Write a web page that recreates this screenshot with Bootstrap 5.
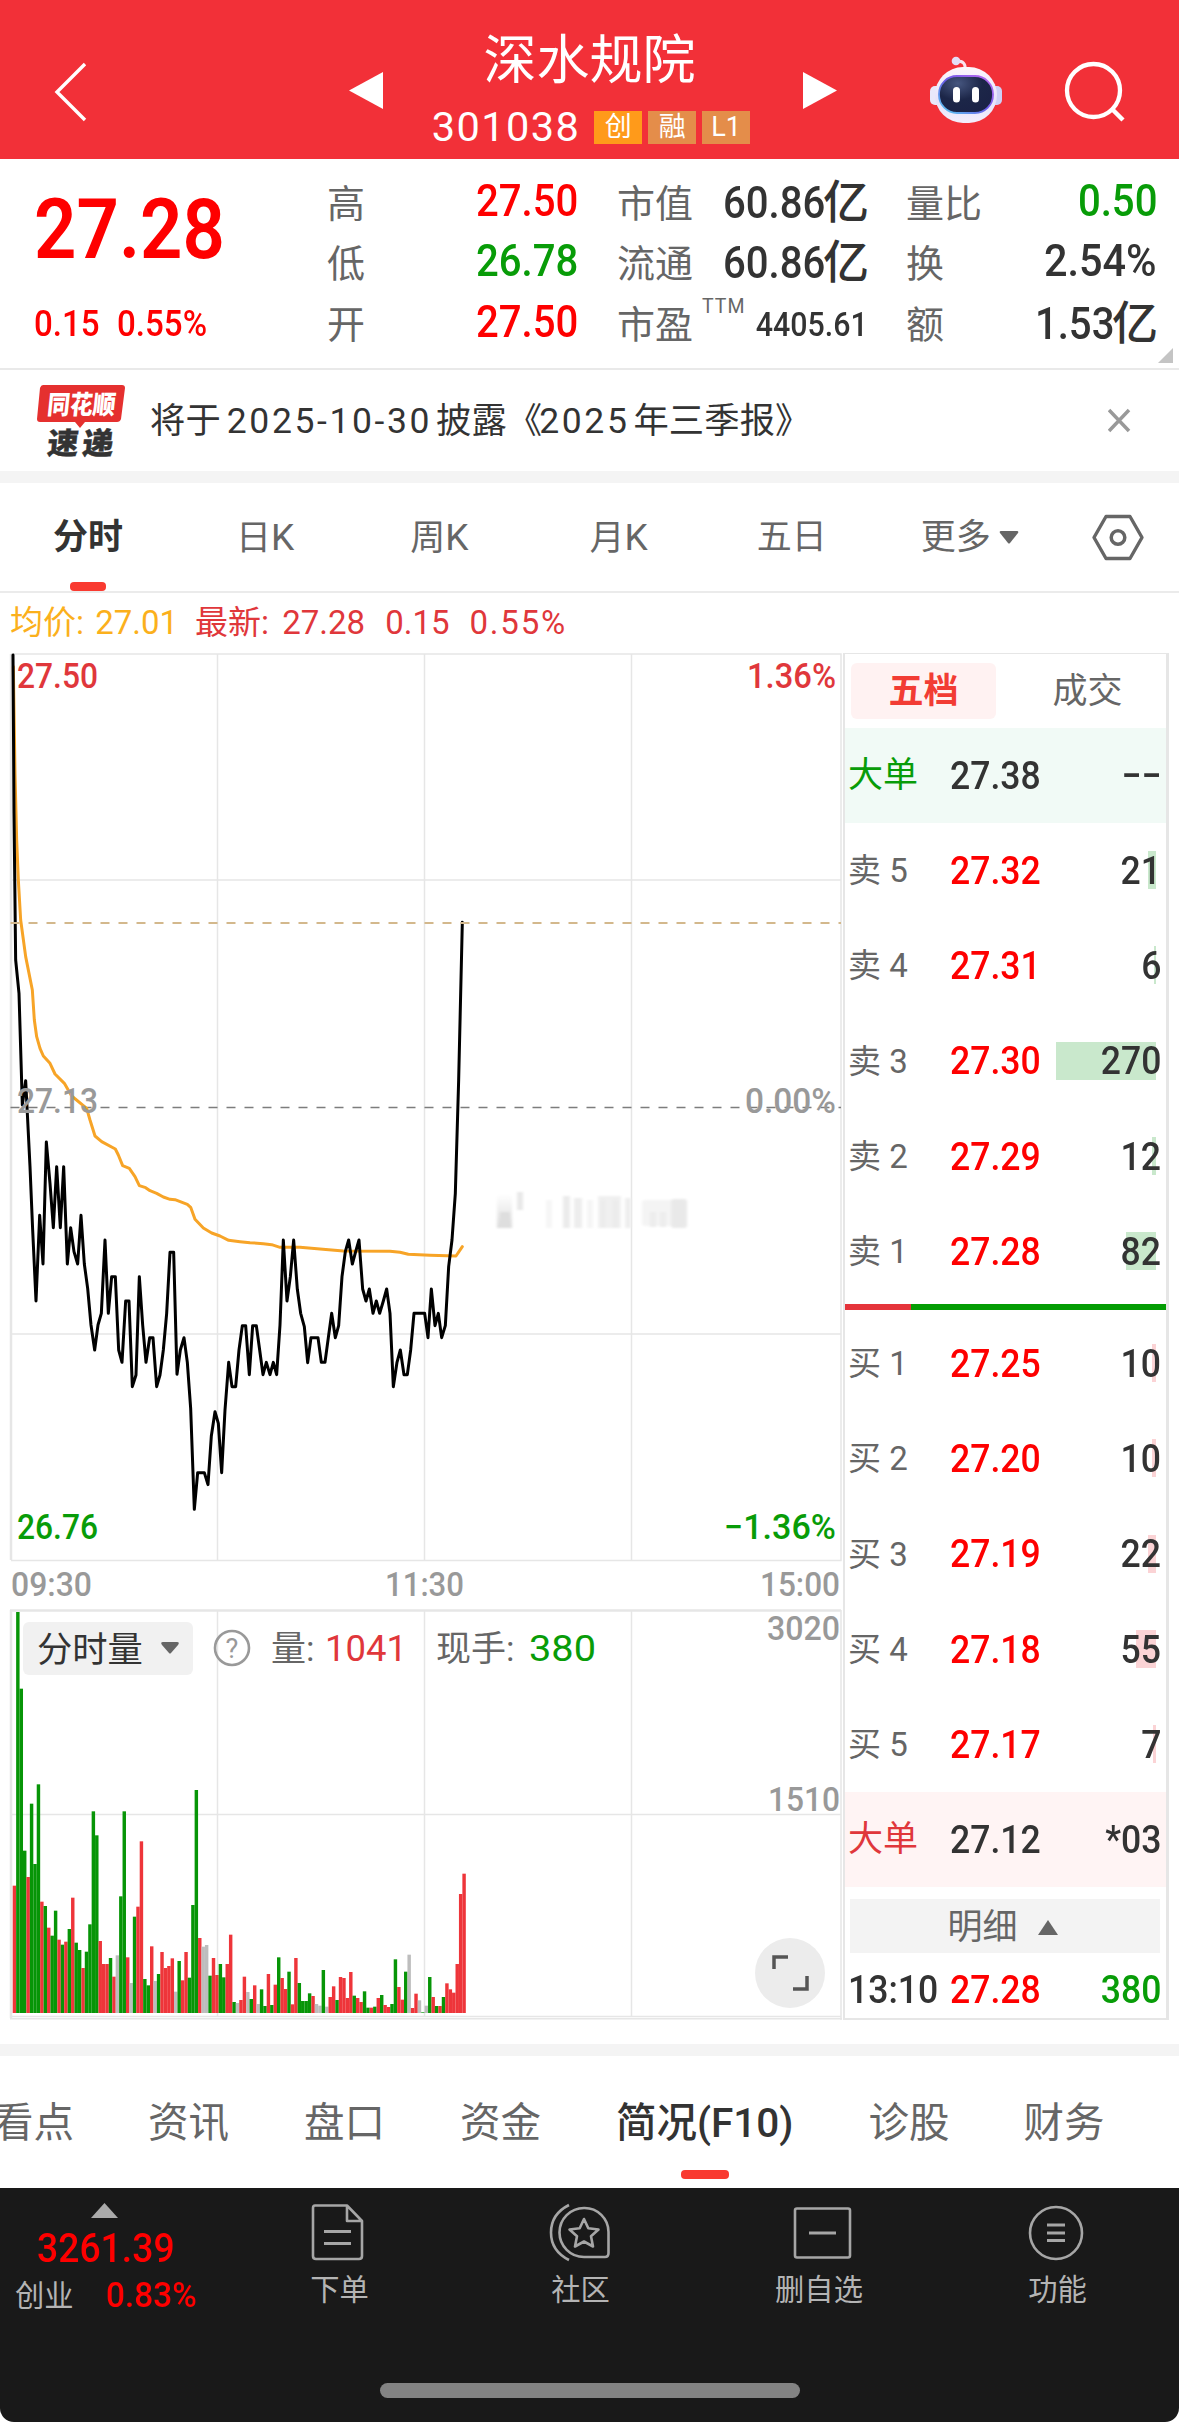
<!DOCTYPE html>
<html lang="zh-CN">
<head>
<meta charset="utf-8">
<meta name="viewport" content="width=device-width, initial-scale=1">
<title>深水规院 301038</title>
<link rel="stylesheet" href="https://cdn.jsdelivr.net/npm/bootstrap@5.3.0/dist/css/bootstrap.min.css">
<style>
:root{--up:#fe0000;--dn:#089c08;--ink:#333;--sub:#666}
body{width:1179px;height:2422px;overflow:hidden;background:#fff;color:var(--ink);font-family:Roboto,"Noto Sans CJK SC",sans-serif;font-size:35px;line-height:1}
svg{display:block;flex:none}
svg text{font-family:Roboto,"Noto Sans CJK SC",sans-serif}
.din{display:inline-block;font-weight:500;transform:scaleX(.92);transform-origin:0 50%;white-space:nowrap}
.din-r{transform-origin:100% 50%}
.up{color:var(--up)}.dn{color:var(--dn)}.crim{color:#e0373b}.amber{color:#fbb01c}
.topbar{height:159px;background:#f23038;color:#fff}
.stock-head{width:392px;padding-top:29px}
.stock-name{font-size:53px;line-height:64px;margin-left:-3px}
.stock-code{font-size:41.5px;line-height:42px;letter-spacing:1.4px;margin-right:8px}
.code-row{margin-top:13px;gap:6px}
.flag{width:48px;height:33px;background:#e48d4a;font-size:27px;line-height:33px}
.flag-hot{background:#ff9a1a}
.quote{height:211px;border-bottom:2px solid #e9e9e9;padding-top:13px;position:relative}
.quote-main{width:329px;padding-left:34px}
.last-price{font-size:84px;line-height:84px;margin-top:16px;font-weight:600;transform:scaleX(.885)}
.change{font-size:36px;line-height:40px;margin-top:32px}
.change span{display:inline-block}
.qcol{width:249px}
.qrow{height:60.4px;line-height:60px}
.qlabel{font-size:38px;color:var(--sub);padding-top:2px;margin-left:-2px}
.qval{font-size:43.6px}
.yi{font-size:46px;font-weight:500;margin-left:-2px;margin-right:-1px;display:inline-block}
.ttm{font-size:19.5px;line-height:20px;letter-spacing:1px;color:var(--sub);padding-top:4px;margin-left:9px}
.corner{position:absolute;right:6px;bottom:5px}
.notice{height:101px;padding-left:32px}
.notice-text{font-size:35.3px;line-height:42px;margin-left:18px;letter-spacing:.1px}
.notice-text b{font-weight:400;font-size:35.5px;letter-spacing:2.6px;margin:0 4px 0 6px}
.band{height:12px;background:#f4f4f4}
.ktabs{height:110px;border-bottom:2px solid #ebebeb;color:var(--sub);font-size:35px;line-height:110px}
.ktabs>div{flex:none;position:relative;white-space:nowrap}
.tab-on{font-weight:700;color:var(--ink)}
.tab-on::after{content:"";position:absolute;left:50%;bottom:0;height:9px;width:var(--w,36px);margin-left:calc(var(--w,36px)/-2);border-radius:4px;background:#f93a30}
.info{height:60px;padding-left:10px;font-size:33px;line-height:59px}
.info span{white-space:pre}
.board{height:1368px}
.depth{width:326px;border:2px solid #e6e6e6;border-top-width:1px;border-right-width:3px;height:1367px}
.depth .din{transform:scaleX(.9)}
.dtabs{height:74px;padding:9px 0 0 6px;line-height:58px;font-size:35px;color:var(--sub)}
.dtabs>div{width:145px;height:56px;text-align:center}
.dtab-on{background:#fff2f2;border-radius:6px;color:#f23c34;font-weight:700}
.drow{height:95.2px;padding:0 5px 0 3px;font-size:39.5px;position:relative}
.dname{width:102px;font-size:33px;color:var(--sub);white-space:pre}
.dname.big{font-size:35px}
.dname.dn{color:var(--dn)}.dname.crim{color:#e0373b}
.dname.clock{font-size:39.5px;color:var(--ink)}
.drow>*{z-index:1}
.vbar{position:absolute;right:10px;top:28px;height:38px;z-index:0;background:#c9e8cc}
.buy .vbar{background:#fbd3d5}
.ratio{height:6px;margin:5px 0 6px;background:#049c04}
.ratio i{display:block;height:6px;width:66px;background:#e5343b}
.more-btn{height:54px;margin:12px 6px 0 5px;background:#f3f3f3;color:var(--sub);font-size:35px;padding:2px 4px 0 0}
.ftabs{height:132px;line-height:135px;font-size:40.5px;color:var(--sub)}
.ftabs>div{flex:none;position:relative;white-space:nowrap;height:132px}
.ftabs .tab-on{--w:48px;font-weight:500}
.ftabs .tab-on::after{bottom:9px}
.dock{height:234px;background:#191919;border-radius:0 0 14px 14px;color:#b4b4b4}
.dock-item{width:241px;font-size:29.3px;line-height:40px;text-align:center}
.index-box{width:210px;padding-top:15px}
.home-bar{width:420px;height:15px;border-radius:8px;background:#838383;margin:71px auto 0}
</style>
</head>
<body>
<header class="topbar d-flex">
  <svg width="340" height="159" viewBox="0 0 340 159"><path d="M85 64 57 92 85 120" fill="none" stroke="#fff" stroke-width="3.4"/></svg>
  <svg width="55" height="159" viewBox="340 0 55 159"><path d="M349 90.500 383 72V109Z" fill="#fff"/></svg>
  <div class="stock-head text-center">
    <div class="stock-name">深水规院</div>
    <div class="code-row d-flex align-items-center justify-content-center">
      <span class="stock-code">301038</span>
      <span class="flag flag-hot">创</span><span class="flag">融</span><span class="flag">L1</span>
    </div>
  </div>
  <svg width="63" height="159" viewBox="787 0 63 159"><path d="M837 90.500 803 72V109Z" fill="#fff"/></svg>
  <svg width="180" height="159" viewBox="850 0 180 159">
    <defs><linearGradient id="head" x1="0" y1="0" x2="0" y2="1"><stop offset="0" stop-color="#fdf7fc"/><stop offset=".6" stop-color="#e6e2fa"/><stop offset="1" stop-color="#f3eefc"/></linearGradient>
    <linearGradient id="rim" x1="0" y1="1" x2="1" y2="0"><stop offset="0" stop-color="#5ad0f0"/><stop offset=".5" stop-color="#6a5be8"/><stop offset="1" stop-color="#c46af0"/></linearGradient>
    <radialGradient id="face" cx=".35" cy=".2" r=".9"><stop offset="0" stop-color="#46567f"/><stop offset=".5" stop-color="#1c2648"/><stop offset="1" stop-color="#1a2145"/></radialGradient></defs>
    <path d="M957 61q9 0 8 8" fill="none" stroke="#fbe4f0" stroke-width="3"/><circle cx="956" cy="61" r="4.300" fill="#e4def8"/>
    <rect x="930" y="86" width="12" height="19" rx="5" fill="#e9e8fa"/><rect x="990" y="86" width="12" height="19" rx="5" fill="#cdd0f5"/>
    <rect x="935" y="67" width="62" height="56" rx="28" fill="url(#head)"/>
    <rect x="939" y="76" width="54" height="37" rx="18" fill="url(#face)" stroke="url(#rim)" stroke-width="1.800"/>
    <rect x="953" y="87" width="7" height="15.500" rx="3.500" fill="#fff"/><rect x="972" y="87" width="7" height="15.500" rx="3.500" fill="#fff"/>
  </svg>
  <svg width="149" height="159" viewBox="1030 0 149 159"><circle cx="1093.500" cy="90.500" r="26.500" fill="none" stroke="#fff" stroke-width="4.300"/><path d="M1112 109 1123 120" stroke="#fff" stroke-width="4.500"/></svg>
</header>

<section class="quote d-flex">
  <div class="quote-main up">
    <div><span class="din last-price">27.28</span></div>
    <div class="change"><span class="din">0.15</span><span class="din" style="margin-left:12px">0.55%</span></div>
  </div>
  <div class="qcol">
    <div class="qrow d-flex justify-content-between"><span class="qlabel">高</span><span class="qval din din-r up">27.50</span></div>
    <div class="qrow d-flex justify-content-between"><span class="qlabel">低</span><span class="qval din din-r dn">26.78</span></div>
    <div class="qrow d-flex justify-content-between"><span class="qlabel">开</span><span class="qval din din-r up">27.50</span></div>
  </div>
  <div class="qcol" style="margin-left:41px">
    <div class="qrow d-flex justify-content-between"><span class="qlabel">市值</span><span><span class="qval din din-r">60.86</span><span class="yi">亿</span></span></div>
    <div class="qrow d-flex justify-content-between"><span class="qlabel">流通</span><span><span class="qval din din-r">60.86</span><span class="yi">亿</span></span></div>
    <div class="qrow d-flex"><span class="qlabel">市盈</span><span class="ttm">TTM</span><span class="din din-r ms-auto" style="font-size:33px;padding-top:2px">4405.61</span></div>
  </div>
  <div class="qcol" style="margin-left:40px">
    <div class="qrow d-flex justify-content-between"><span class="qlabel">量比</span><span class="qval din din-r dn">0.50</span></div>
    <div class="qrow d-flex justify-content-between"><span class="qlabel">换</span><span class="qval din din-r" style="transform:scaleX(.95)">2.54%</span></div>
    <div class="qrow d-flex justify-content-between"><span class="qlabel">额</span><span><span class="qval din din-r">1.53</span><span class="yi">亿</span></span></div>
  </div>
  <svg class="corner" width="15" height="15" viewBox="0 0 15 15"><path d="M15 0V15H0Z" fill="#c4c4c4"/></svg>
</section>

<section class="notice d-flex align-items-center">
  <svg width="100" height="80" viewBox="32 380 100 80">
    <path d="M43 384H122Q125 384 125 387L121 418Q120 421 117 421H85L80 427 75 421H40Q37 421 37 418L40 387Q41 384 43 384Z" fill="#e5302f"/>
    <g transform="skewX(-6)" font-weight="900"><text x="90" y="413" font-size="26" fill="#fff" textLength="68" lengthAdjust="spacingAndGlyphs">同花顺</text>
    <text x="94" y="453" font-size="30" fill="#333" stroke="#333" stroke-width=".4" textLength="31" lengthAdjust="spacingAndGlyphs">速</text><text x="129" y="453" font-size="30" fill="#333" stroke="#333" stroke-width=".4" textLength="31" lengthAdjust="spacingAndGlyphs">递</text></g>
  </svg>
  <div class="notice-text">将于<b>2025-10-30</b>披露《<b style="margin-left:-3px">2025</b>年三季报》</div>
  <svg class="ms-auto" width="71" height="40" viewBox="1108 400 71 40"><path d="M1109 409 1129 430M1129 409 1109 430" stroke="#999" stroke-width="3.500"/></svg>
</section>
<div class="band"></div>

<nav class="ktabs d-flex">
  <div class="tab-on" style="margin-left:53px">分时</div>
  <div style="margin-left:113px">日<span style="font-size:37px">K</span></div>
  <div style="margin-left:116px">周<span style="font-size:37px">K</span></div>
  <div style="margin-left:121px">月<span style="font-size:37px">K</span></div>
  <div style="margin-left:109px">五日</div>
  <div style="margin-left:94px">更多</div>
  <svg width="20" height="110" viewBox="1001 483 20 110" style="margin-left:8px"><path d="M1003 531H1019Q1021 531 1020 533L1012 543Q1011 544 1010 543L1002 533Q1001 531 1003 531Z" fill="#666"/></svg>
  <svg width="54" height="110" viewBox="1092 483 54 110" style="margin-left:72px"><path d="M1107 516.500H1131L1143 537.500 1131 558.500H1107L1095 537.500Z" fill="none" stroke="#666" stroke-width="3.400" stroke-linejoin="round"/><circle cx="1119" cy="537.500" r="6.800" fill="none" stroke="#666" stroke-width="3.500"/></svg>
</nav>

<div class="info d-flex">
  <span class="amber">均价: </span><span class="amber" style="margin-left:3px">27.01</span>
  <span class="crim" style="margin-left:17px">最新: </span><span class="crim" style="margin-left:5px">27.28</span>
  <span class="crim" style="margin-left:20px">0.15</span><span class="crim" style="margin-left:20px;letter-spacing:1.8px">0.55%</span>
</div>

<main class="board d-flex">
  <svg width="843" height="1368" viewBox="0 653 843 1368">
    <defs><linearGradient id="smudge" x1="0" y1="0" x2="0" y2="1"><stop offset="0" stop-color="#fff"/><stop offset="1" stop-color="#dcdcdc"/></linearGradient>
    <filter id="soft" x="-10%" y="-10%" width="120%" height="120%"><feGaussianBlur stdDeviation="1.800 1"/></filter></defs>
    <g stroke="#e6e6e6" stroke-width="1.500" fill="none">
      <path d="M11 654H841V1560.500H11M217.500 654V1560M424.500 654V1560M631.500 654V1560M11 880H841M11 1334H841"/>
      <path d="M11 2016.500H841M217.500 1611V2017M424.500 1611V2017M631.500 1611V2017M11 1814.500H841"/>
      <path d="M10 1610.500H841M11 654V1560M11 1610V2018" stroke-width="2.500"/>
      <path d="M841 1610V2020M10 2018.700H842" stroke-width="1.500"/>
    </g>
    <g filter="url(#soft)">
      <rect x="497" y="1194" width="15" height="34" fill="url(#smudge)"/><rect x="500" y="1212" width="10" height="16" fill="#dedede"/><rect x="517" y="1192" width="6" height="18" fill="#e8e8e8"/>
      <rect x="546" y="1200" width="6" height="28" fill="#f6f6f6"/><rect x="563" y="1196" width="7" height="32" fill="#ebebeb"/><rect x="574" y="1198" width="8" height="30" fill="#ededed"/><rect x="587" y="1200" width="6" height="28" fill="#f5f5f5"/><rect x="598" y="1196" width="23" height="32" fill="#f0f0f0"/><rect x="601" y="1200" width="4" height="28" fill="#ebebeb"/><rect x="613" y="1200" width="5" height="28" fill="#ebebeb"/><rect x="625" y="1198" width="6" height="30" fill="#eee"/>
      <rect x="642" y="1200" width="44" height="26" rx="3" fill="#f4f4f4"/><rect x="650" y="1212" width="6" height="15" fill="#ececec"/><rect x="660" y="1212" width="6" height="15" fill="#ececec"/><rect x="671" y="1199" width="16" height="29" rx="3" fill="#e9e9e9"/>
    </g>
    <path d="M10.500 1107.500H841" stroke="#7d7d7d" stroke-width="1.600" stroke-dasharray="9 9"/>
    <g transform="translate(0 1080) scale(.33333)" fill="none" stroke-linejoin="round" stroke-linecap="round">
      <polyline stroke="#f7a427" stroke-width="9" points="40,-1240 45,-920 50,-720 55,-600 62,-480 77,-370 97,-270 103,-180 110,-130 120,-95 130,-72 150,-50 165,-18 193,10 215,48 260,85 270,120 285,168 305,185 346,207 355,225 368,257 388,265 405,290 418,317 437,323 450,332 470,340 490,351 510,358 525,359 562,373 572,382 585,418 610,444 635,459 660,468 686,481 720,485 750,488 790,491 815,494 840,502 900,502 960,507 1030,513 1170,514 1200,517 1225,523 1290,526 1368,528 1387,500"/>
      <polyline stroke="#000" stroke-width="9" points="39,-1275 42,-800 47,-360 57,-260 67,75 77,2 83,120 90,260 98,450 108,663 119,406 129,552 139,186 150,310 160,443 170,260 181,443 191,260 202,552 212,443 222,515 233,552 243,406 253,552 263,625 273,735 284,810 294,735 304,700 315,480 325,700 335,590 346,590 356,810 366,847 377,663 387,663 397,920 408,885 418,590 428,735 438,847 449,773 459,773 470,920 480,885 490,810 500,700 510,517 521,517 531,883 541,810 552,773 562,847 572,985 583,1288 593,1178 613,1178 624,1214 634,1068 645,995 655,1030 665,1178 675,990 686,847 696,920 707,920 717,810 727,737 737,737 748,884 758,737 769,737 779,810 789,884 799,847 810,884 820,847 830,884 840,735 850,480 861,663 871,590 881,480 892,628 902,700 913,740 923,848 933,773 954,773 964,847 975,847 985,773 995,700 1006,773 1016,737 1026,590 1036,515 1046,480 1057,552 1067,515 1077,480 1088,627 1098,663 1108,627 1119,700 1129,663 1139,700 1150,663 1160,627 1170,700 1180,920 1191,847 1201,810 1212,884 1222,884 1232,810 1242,700 1274,700 1284,773 1294,627 1305,737 1315,700 1325,773 1336,737 1346,560 1356,480 1366,340 1376,0 1387,-473"/>
    </g>
    <path d="M10.500 923H841" stroke="#d3b88c" stroke-width="1.800" stroke-dasharray="9 9"/>
    <g id="bars"></g>
    <g font-size="35" font-weight="500">
      <text x="17" y="688" fill="#e0373b" textLength="81" lengthAdjust="spacingAndGlyphs">27.50</text>
      <text x="17" y="1113" fill="#999" textLength="81" lengthAdjust="spacingAndGlyphs">27.13</text>
      <text x="17" y="1539" fill="#089c08" textLength="81" lengthAdjust="spacingAndGlyphs">26.76</text>
      <text x="747" y="688" fill="#e0373b" textLength="89" lengthAdjust="spacingAndGlyphs">1.36%</text>
      <text x="745" y="1113" fill="#999" textLength="91" lengthAdjust="spacingAndGlyphs">0.00%</text>
      <text x="724" y="1539" fill="#089c08" textLength="112" lengthAdjust="spacingAndGlyphs">−1.36%</text>
      <g fill="#999" font-size="34">
      <text x="11" y="1596" textLength="81" lengthAdjust="spacingAndGlyphs">09:30</text>
      <text x="385" y="1596" textLength="79" lengthAdjust="spacingAndGlyphs">11:30</text>
      <text x="760" y="1596" textLength="80" lengthAdjust="spacingAndGlyphs">15:00</text>
      <text x="767" y="1640" textLength="73" lengthAdjust="spacingAndGlyphs">3020</text>
      <text x="768" y="1811" textLength="72" lengthAdjust="spacingAndGlyphs">1510</text></g>
    </g>
    <rect x="23" y="1622" width="170" height="53" rx="6" fill="#f1f1f1"/>
    <text x="37" y="1662" font-size="35.300" fill="#333">分时量</text>
    <path d="M163 1642H177Q180 1642 178 1645L171 1653Q170 1654 169 1653L162 1645Q160 1642 163 1642Z" fill="#666"/>
    <circle cx="232" cy="1648" r="17" fill="none" stroke="#999" stroke-width="2.600"/>
    <text x="232" y="1658" font-size="27" text-anchor="middle" fill="#999">?</text>
    <g font-size="35"><text x="271" y="1661" fill="#666">量:</text><text x="436" y="1661" fill="#666">现手:</text>
    <text x="325" y="1660.500" font-size="36" fill="#e0373b" textLength="82" lengthAdjust="spacingAndGlyphs">1041</text><text x="529" y="1660.500" font-size="36" fill="#089c08" textLength="67" lengthAdjust="spacingAndGlyphs">380</text></g>
    <circle cx="790" cy="1973" r="35" fill="#ececec"/>
    <path d="M774 1969V1957H788M807 1976V1989H793" fill="none" stroke="#555" stroke-width="3.500"/>
  </svg>

  <aside class="depth">
    <div class="dtabs d-flex"><div class="dtab-on">五档</div><div style="margin-left:19px">成交</div></div>
    <div id="sells"></div>
    <div class="ratio"><i></i></div>
    <div id="buys" class="buy"></div>
    <div class="more-btn d-flex align-items-center justify-content-center"><span>明细</span><svg width="22" height="15" viewBox="0 0 22 15" style="margin-left:19px"><path d="M11 0 21 15H1Z" fill="#666"/></svg></div>
    <div class="drow d-flex align-items-center" style="height:72px"><span class="dname clock"><span class="din">13:10</span></span><span class="din up">27.28</span><span class="din din-r dn ms-auto">380</span></div>
  </aside>
</main>

<div style="height:23px"></div>
<div class="band"></div>
<nav class="ftabs d-flex overflow-hidden">
  <div style="margin-left:-7px">看点</div>
  <div style="margin-left:74px">资讯</div>
  <div style="margin-left:75px">盘口</div>
  <div style="margin-left:75px">资金</div>
  <div class="tab-on" style="margin-left:75px">简况(F10)</div>
  <div style="margin-left:75px">诊股</div>
  <div style="margin-left:74px">财务</div>
</nav>

<footer class="dock">
  <div class="d-flex" style="height:124px">
    <div class="index-box">
      <svg width="27" height="15" viewBox="0 0 27 15" style="margin-left:91px"><path d="M13.500 0 27 15H0Z" fill="#aaa"/></svg>
      <div class="up" style="font-size:41px;line-height:44px;margin:8px 0 0 37px"><span class="din" style="transform:scaleX(.91)">3261.39</span></div>
      <div class="d-flex align-items-center" style="margin-left:15px;line-height:46px"><span style="font-size:29.3px;padding-top:3px">创业</span><span class="din up" style="font-size:35.5px;margin-left:32px;transform:scaleX(.94)">0.83%</span></div>
    </div>
    <div class="dock-item" style="margin-left:9px">
      <svg class="mx-auto" width="60" height="82" viewBox="310 2188 60 82" fill="none" stroke="#a6a6a6" stroke-width="2.600" stroke-linejoin="round"><path d="M315 2205.500H347L362 2221V2256Q362 2259 359 2259H316Q313 2259 313 2256V2208Q313 2205.500 315 2205.500ZM347 2206V2221H361"/><path d="M324 2231.500H351M324 2243.500H351" stroke-width="3"/></svg>
      <div>下单</div>
    </div>
    <div class="dock-item">
      <svg class="mx-auto" width="66" height="82" viewBox="547 2188 66 82" fill="none" stroke="#a6a6a6" stroke-width="2.600" stroke-linejoin="round"><path d="M568 2205Q550 2214 550 2232.500T568 2260"/><path d="M583 2208A24 24 0 0 1 607.500 2232V2253Q607.500 2257 604 2257H583A24.500 24.500 0 0 1 583 2208Z"/><path d="M583 2219 587.300 2228.200 597.500 2229.500 590 2236.300 592 2246.500 583 2241.500 574 2246.500 576 2236.300 568.500 2229.500 578.700 2228.200Z"/></svg>
      <div>社区</div>
    </div>
    <div class="dock-item" style="width:236px">
      <svg class="mx-auto" width="60" height="82" viewBox="789 2188 60 82" overflow="visible" fill="none" stroke="#a6a6a6" stroke-width="2.600"><rect x="795" y="2208.500" width="55" height="49" rx="2"/><path d="M809 2233H836" stroke-width="3"/></svg>
      <div>删自选</div>
    </div>
    <div class="dock-item">
      <svg class="mx-auto" width="60" height="82" viewBox="1030 2188 60 82" fill="none" stroke="#a6a6a6" stroke-width="2.600"><circle cx="1058" cy="2233" r="26"/><path d="M1049 2225H1067M1049 2233H1067M1049 2240.500H1067" stroke-width="2.800"/></svg>
      <div>功能</div>
    </div>
  </div>
  <div class="home-bar"></div>
</footer>

<script src="https://cdn.jsdelivr.net/npm/bootstrap@5.3.0/dist/js/bootstrap.bundle.min.js"></script>
<script>
// One entry per minute: colour key (r up, g down, n flat) and bar top on a 0-1299 scale.
const vol = `r917 g96 g326 g812 r891 g671 g852 g613 r965 g978 r1043 g1067 g992 r1079 g1094 r1085 g1047 r953 g1088 g1110 r1164 g1115 g1033 g694 g766 r1083 r1152 r1152 g1134 r1190 n1126 g949 g694 r1132 n1209 g1010 r980 r784 g1197 g1216 r1099 n1203 g1182 r1116 r1164 r1158 r1135 n1235 g1143 r1201 r1116 g1193 g975 g630 r1074 n1100 n1095 g1187 r1134 r1185 g1152 g1192 r1152 r1064 g1266 n1269 r1260 r1190 n1236 g1257 r1216 n1272 g1228 g1278 r1182 g1275 r1214 g1132 r1194 r1227 g1175 r1273 r1134 g1209 g1263 g1263 g1240 r1248 n1272 n1277 g1170 n1280 r1251 r1219 g1260 r1191 r1194 r1254 r1176 g1247 r1254 r1266 g1234 g1283 r1283 g1280 r1254 g1245 r1275 r1281 g1272 g1138 r1221 r1259 g1175 n1124 r1284 r1241 n1261 g1297 n1277 g1191 r1251 g1278 r1278 g1251 r1210 r1228 r1238 r1152 r942 r881`.split(' ');
const tone = {r:'#ee353a', g:'#079507', n:'#bdbdbd'};
document.getElementById('bars').innerHTML = vol.map((v,i)=>{
  const top = +v.slice(1);
  return `<rect x="${(12.7+i*3.4326).toFixed(2)}" y="${(1580+top/3).toFixed(2)}" width="3.44" height="${((1299-top)/3).toFixed(2)}" fill="${tone[v[0]]}"/>`;
}).join('');

const row = ([name,price,qty]) => {
  const big = name==='大单', n = parseInt(qty);
  return {big, html:(cls,bg)=>`<div class="drow d-flex align-items-center"${big?` style="background:${bg}"`:''}>`+
    `<span class="dname ${big?'big '+cls:''}">${name}</span><span class="din ${big?'':'up'}">${price}</span>`+
    `<span class="din din-r ms-auto">${qty}</span>${!big?`<i class="vbar" style="width:${Math.max(2,Math.round(n/2.7))}px"></i>`:''}</div>`};
};
const fill = (id,rows,cls,bg)=>document.getElementById(id).innerHTML = rows.map(r=>row(r).html(cls,bg)).join('');
fill('sells',[['大单','27.38','−−'],['卖 5','27.32','21'],['卖 4','27.31','6'],['卖 3','27.30','270'],['卖 2','27.29','12'],['卖 1','27.28','82']],'dn','#f1faf6');
fill('buys',[['买 1','27.25','10'],['买 2','27.20','10'],['买 3','27.19','22'],['买 4','27.18','55'],['买 5','27.17','7'],['大单','27.12','*03']],'crim','#fff4f4');
</script>
</body>
</html>
